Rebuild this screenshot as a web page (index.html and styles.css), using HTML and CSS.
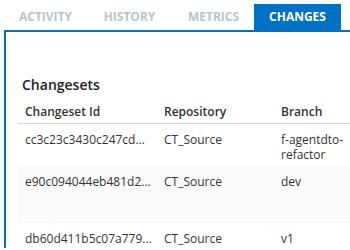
FILE: index.html
```html
<!DOCTYPE html>
<html lang="en">
<head>
    <meta charset="UTF-8">
    <meta name="viewport" content="width=device-width, initial-scale=1.0">
    <title>Changes</title>
    <link rel="stylesheet" href="styles.css">
</head>
<body>
    <div class="tabs">
        <div class="tab">Activity</div>
        <div class="tab">History</div>
        <div class="tab">Metrics</div>
        <div class="tab active">Changes</div>
    </div>
    <div class="panel">
        <h3>Changesets</h3>
        <table class="changes">
            <thead>
                <tr>
                    <th class="col-id">Changeset Id</th>
                    <th class="col-repo">Repository</th>
                    <th class="col-branch">Branch</th>
                </tr>
            </thead>
            <tbody>
                <tr>
                    <td>cc3c23c3430c247cd...</td>
                    <td>CT_Source</td>
                    <td>f-agentdto-refactor</td>
                </tr>
                <tr class="tall">
                    <td>e90c094044eb481d2...</td>
                    <td>CT_Source</td>
                    <td>dev</td>
                </tr>
                <tr>
                    <td>db60d411b5c07a779...</td>
                    <td>CT_Source</td>
                    <td>v1</td>
                </tr>
            </tbody>
        </table>
    </div>
</body>
</html>
```

FILE: styles.css
```css
/* Page */
body {
    margin: 0;
    font-family: "Open Sans", "Noto Sans", Arial, sans-serif;
    color: #333;
    overflow: hidden;
    width: 350px;
    height: 250px;
}

/* Tabs */
.tabs {
    display: flex;
    padding: 4px 0 0 2px;
}
.tab {
    width: 87px;
    margin-right: -3px;
    height: 26px;
    line-height: 26px;
    text-align: center;
    font-size: 12px;
    font-weight: 700;
    text-transform: uppercase;
    color: #bcc3cb;
}
.tab.active {
    background-color: #0072c6;
    color: #fff;
}

/* Panel */
.panel {
    margin-left: 4px;
    height: 218px;
    overflow: hidden;
    border-top: 2px solid #0072c6;
    border-left: 2px solid #0072c6;
    padding: 44px 0 0 12px;
    box-sizing: border-box;
}
h3 {
    margin: 0 0 2px 4px;
    font-size: 14px;
    font-weight: 600;
    line-height: 18px;
    color: #222;
}

/* Table */
.changes {
    border-collapse: collapse;
    font-size: 12px;
    line-height: 15px;
    width: 342px;
    table-layout: fixed;
}
.changes th,
.changes td {
    text-align: left;
    vertical-align: top;
    padding: 8px 7px 4px;
}
.changes th {
    font-weight: 600;
    border-bottom: 1px solid #d4d4d4;
}
.col-id {
    width: 125px;
}
.col-repo {
    width: 103px;
}
.col-branch {
    width: 72px;
}
.changes tr.tall {
    height: 57px;
    background-color: #fafafa;
}
```
